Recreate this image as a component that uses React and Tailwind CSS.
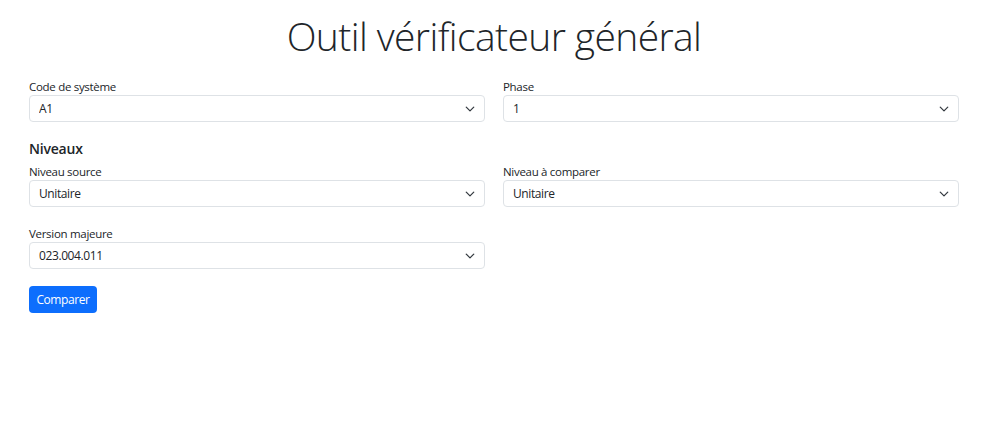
import React from 'react'

const font = { fontFamily: '"Segoe UI", "Open Sans", "Noto Sans", sans-serif' }

function Chevron() {
    return (
        <svg
            className="pointer-events-none absolute right-[10px] top-1/2 -translate-y-1/2 w-[10px] h-[10px]"
            viewBox="0 0 16 16"
            fill="none"
            stroke="#343a40"
            strokeWidth="2"
            strokeLinecap="round"
            strokeLinejoin="round"
        >
            <path d="m2 5 6 6 6-6" />
        </svg>
    )
}

function Field({ label, value, options }) {
    return (
        <div className="flex flex-col">
            <label className="text-[11.5px] leading-[16px] tracking-[-0.3px] text-[#212529]">{label}</label>
            <div className="relative h-[27px]">
                <select
                    defaultValue={value}
                    className="block appearance-none w-full h-[27px] pl-[9px] pr-[28px] text-[12px] tracking-[-0.4px] text-[#212529] bg-white border border-[#dee2e6] rounded-[4px] outline-none"
                    style={font}
                >
                    {options.map(o => (
                        <option key={o} value={o}>{o}</option>
                    ))}
                </select>
                <Chevron />
            </div>
        </div>
    )
}

export default function App() {
    return (
        <div className="bg-white min-h-[438px] text-[#212529]" style={font}>
            <div className="ml-[29px] w-[930px] pt-[11px]">
                <h1 className="text-center text-[39px] font-light leading-[50px] tracking-[-0.6px] mb-[18px]">
                    Outil vérificateur général
                </h1>

                <div className="grid grid-cols-2 gap-x-[18px]">
                    <Field label="Code de système" value="A1" options={['A1', 'A2', 'B1']} />
                    <Field label="Phase" value="1" options={['1', '2', '3']} />
                </div>

                <h5 className="mt-[18px] text-[14px] font-semibold leading-[18px] tracking-[-0.2px] mb-[6px]">Niveaux</h5>

                <div className="grid grid-cols-2 gap-x-[18px]">
                    <Field label="Niveau source" value="Unitaire" options={['Unitaire', 'Intégration']} />
                    <Field label="Niveau à comparer" value="Unitaire" options={['Unitaire', 'Intégration']} />
                </div>

                <div className="grid grid-cols-2 gap-x-[18px] mt-[19px]">
                    <Field label="Version majeure" value="023.004.011" options={['023.004.011', '023.004.010']} />
                </div>

                <button className="block mt-[17px] w-[68px] h-[27px] rounded-[4px] bg-[#0d6efd] text-white text-[12px] tracking-[-0.4px]" style={font}>
                    Comparer
                </button>
            </div>
        </div>
    )
}
